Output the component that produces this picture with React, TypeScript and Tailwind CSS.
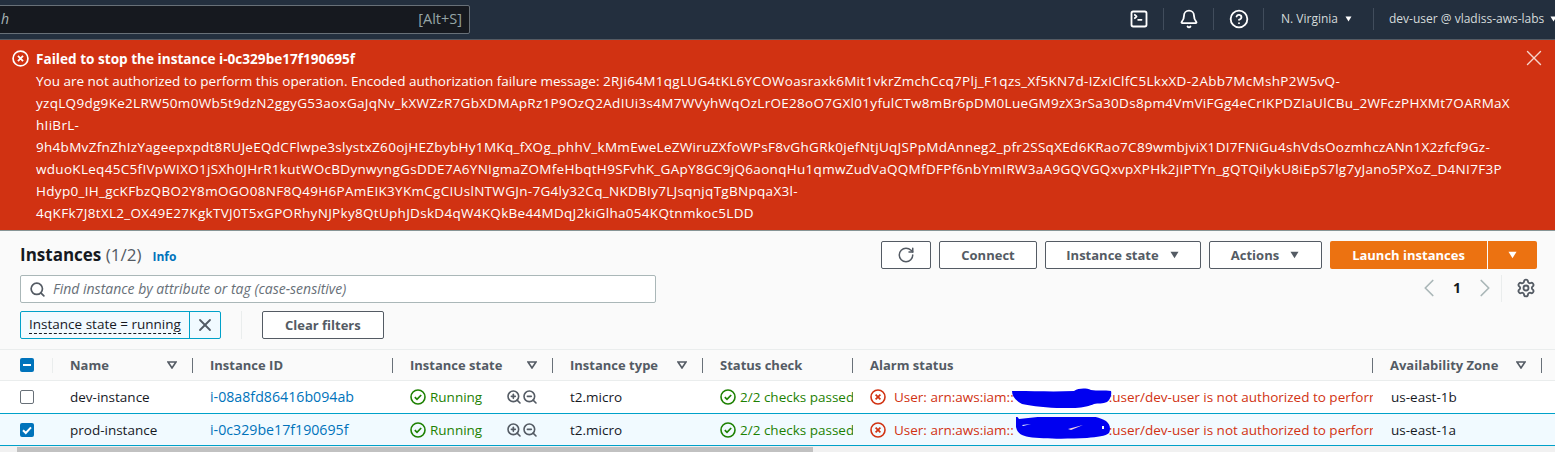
import { Bell, ChevronLeft, ChevronRight, CircleHelp, RotateCw, Search, Settings, SquareTerminal, X, ZoomIn, ZoomOut } from 'lucide-react'

const MESSAGE_INTRO = 'You are not authorized to perform this operation. Encoded authorization failure message: '

const MESSAGE_LINES = [
	'2RJi64M1qgLUG4tKL6YCOWoasraxk6Mit1vkrZmchCcq7Plj_F1qzs_Xf5KN7d-IZxIClfC5LkxXD-2Abb7McMshP2W5vQ-',
	'yzqLQ9dg9Ke2LRW50m0Wb5t9dzN2ggyG53aoxGaJqNv_kXWZzR7GbXDMApRz1P9OzQ2AdIUi3s4M7WVyhWqOzLrOE28oO7GXl01yfulCTw8mBr6pDM0LueGM9zX3rSa30Ds8pm4VmViFGg4eCrIKPDZIaUlCBu_2WFczPHXMt7OARMaX',
	'hIiBrL-',
	'9h4bMvZfnZhIzYageepxpdt8RUJeEQdCFlwpe3slystxZ60ojHEZbybHy1MKq_fXOg_phhV_kMmEweLeZWiruZXfoWPsF8vGhGRk0jefNtjUqJSPpMdAnneg2_pfr2SSqXEd6KRao7C89wmbjviX1DI7FNiGu4shVdsOozmhczANn1X2zfcf9Gz-',
	'wduoKLeq45C5fIVpWIXO1jSXh0JHrR1kutWOcBDynwyngGsDDE7A6YNIgmaZOMfeHbqtH9SFvhK_GApY8GC9jQ6aonqHu1qmwZudVaQQMfDFPf6nbYmIRW3aA9GQVGQxvpXPHk2jIPTYn_gQTQilykU8iEpS7lg7yJano5PXoZ_D4NI7F3P',
	'Hdyp0_IH_gcKFbzQBO2Y8mOGO08NF8Q49H6PAmEIK3YKmCgCIUslNTWGJn-7G4ly32Cq_NKDBIy7LJsqnjqTgBNpqaX3l-',
	'4qKFk7J8tXL2_OX49E27KgkTVJ0T5xGPORhyNJPky8QtUphJDskD4qW4KQkBe44MDqJ2kiGlha054KQtnmkoc5LDD'
]

const COLUMNS = 'grid grid-cols-[53px_140px_200px_160px_150px_150px_520px_169px_1fr]'

const Caret = ({ className }: { className: string }) => (
	<svg viewBox="0 0 12 10" className={className}>
		<path d="M1 1h10L6 9z" fill="currentColor" />
	</svg>
)

const SortCaret = () => (
	<svg viewBox="0 0 10 8" className="h-[8px] w-[10px] text-[#545b64]">
		<path d="M1 1h8L5 7z" fill="none" stroke="currentColor" strokeWidth="1.6" />
	</svg>
)

const CheckCircle = () => (
	<svg viewBox="0 0 16 16" className="h-[16px] w-[16px] shrink-0 text-[#1d8102]">
		<circle cx="8" cy="8" r="7" fill="none" stroke="currentColor" strokeWidth="1.6" />
		<path d="M4.8 8.2l2.2 2.2 4.2-4.4" fill="none" stroke="currentColor" strokeWidth="1.7" />
	</svg>
)

const ErrorCircle = ({ className }: { className: string }) => (
	<svg viewBox="0 0 16 16" className={className}>
		<circle cx="8" cy="8" r="7" fill="none" stroke="currentColor" strokeWidth="1.6" />
		<path d="M5.6 5.6l4.8 4.8M10.4 5.6l-4.8 4.8" fill="none" stroke="currentColor" strokeWidth="1.7" />
	</svg>
)

// hand-drawn redaction over the account id
const Scribble = ({ alt }: { alt?: boolean }) =>
	alt ? (
		<svg viewBox="0 0 98 25" className="-mr-[3px] h-[25px] w-[98px] shrink-0 -translate-y-[3px]">
			<path d="M2 1l3 4c20-2 40-5 60-4 10 0 20 2 27 6 4 3 5 8 3 12-3 3-12 4-22 5-20 1-44 1-58-1C8 22 3 19 2 13z" fill="#0000f0" />
			<path d="M54 15l15-4-12 5z" fill="#f6d5e0" />
			<path d="M8 11l9-1-8 2zM88 12h2v3h-2z" fill="#f1faff" />
		</svg>
	) : (
		<svg viewBox="0 0 100 21" className="-ml-[2px] -mr-[3px] h-[21px] w-[100px] shrink-0 translate-y-[1px]">
			<path d="M0 3c20 0 42 1 62 0 5-3 12-3 17-1 6 1 14 0 20 1 1 4-1 9-4 11-4 2-9 1-13 2-6 3-20 5-32 4-14 0-30-2-40-4C3 12 0 8 0 3z" fill="#0000f0" />
		</svg>
	)

const HeaderCell = ({ label, sort, divider = true }: { label: string; sort?: boolean; divider?: boolean }) => (
	<div className="flex h-[30px] items-center justify-between pl-[17px]">
		<span className="font-bold text-[#545b64]">{label}</span>
		<span className="flex items-center gap-[15px]">
			{sort && <SortCaret />}
			{divider && <span className="h-[15px] w-px bg-[#687078]" />}
		</span>
	</div>
)

const Row = ({
	name,
	id,
	zone,
	selected
}: {
	name: string
	id: string
	zone: string
	selected?: boolean
}) => (
	<div
		className={`${COLUMNS} items-center overflow-hidden whitespace-nowrap text-[13.5px] text-[#16191f] ${
			selected ? 'h-[33px] border-y border-[#00a1c9] bg-[#f1faff]' : 'h-[32px] bg-white'
		}`}
	>
		<div className="pl-[20px]">
			{selected ? (
				<span className="flex h-[14px] w-[14px] items-center justify-center rounded-[2px] bg-[#0073bb]">
					<svg viewBox="0 0 14 14" className="h-[14px] w-[14px]">
						<path d="M3 7.2l2.8 2.8L11 4.4" fill="none" stroke="#fff" strokeWidth="2" />
					</svg>
				</span>
			) : (
				<span className="block h-[14px] w-[14px] rounded-[2px] border border-[#687078] bg-white" />
			)}
		</div>
		<div className="pl-[17px]">{name}</div>
		<div className="pl-[17px] text-[14.2px] text-[#0073bb]">{id}</div>
		<div className="flex items-center pl-[17px] text-[#1d8102]">
			<CheckCircle />
			<span className="ml-[4px] w-[76px]">Running</span>
			<ZoomIn size={16} strokeWidth={2.4} className="text-[#545b64]" />
			<ZoomOut size={16} strokeWidth={2.4} className="text-[#545b64]" />
		</div>
		<div className="pl-[17px]">t2.micro</div>
		<div className="flex items-center overflow-hidden pl-[17px] text-[#1d8102]">
			<CheckCircle />
			<span className="ml-[4px]">2/2 checks passed</span>
		</div>
		<div className="flex items-center overflow-hidden pl-[17px] text-[#d13212]">
			<ErrorCircle className="h-[16px] w-[16px] shrink-0" />
			<span className="ml-[8px] shrink-0">User: arn:aws:iam::</span>
			<Scribble alt={selected} />
			<span className="shrink-0">:user/dev-user is not authorized to perform</span>
		</div>
		<div className="pl-[18px]">{zone}</div>
		<div />
	</div>
)

const OutlineButton = ({ children, className }: { children: React.ReactNode; className: string }) => (
	<div
		className={`flex h-[28px] items-center justify-center rounded-[2px] border border-[#545b64] bg-white font-bold text-[#545b64] ${className}`}
	>
		{children}
	</div>
)

export default function App() {
	return (
		<div className="h-[452px] w-[1555px] overflow-hidden bg-[#fafafa] font-['Open_Sans',sans-serif] text-[13px] leading-[20px]">
			{/* Top nav */}
			<div className="flex h-[40px] items-center border-b border-[#545b64] bg-[#232f3e] pb-[1px] text-[12px] text-[#d5dbdb]">
				<div className="-ml-[10px] flex h-[29px] w-[480px] items-center justify-between rounded-[2px] border border-[#687078] bg-[#16191f] pl-[10px] pr-[7px]">
					<span className="text-[14px] italic text-[#aab7b8]">h</span>
					<span className="text-[14.5px] text-[#95a5a6]">[Alt+S]</span>
				</div>
				<div className="ml-auto flex items-center">
					<SquareTerminal size={20} strokeWidth={2.2} className="mr-[14px] text-white" />
					<span className="h-[22px] w-px bg-[#414d5c]" />
					<Bell size={20} strokeWidth={2.2} className="ml-[15px] mr-[14px] text-white" />
					<span className="h-[22px] w-px bg-[#414d5c]" />
					<CircleHelp size={20} strokeWidth={2.2} className="ml-[15px] mr-[14px] text-white" />
					<span className="h-[22px] w-px bg-[#414d5c]" />
					<span className="ml-[17px] w-[60px] whitespace-nowrap">N. Virginia</span>
					<Caret className="ml-[3px] h-[6px] w-[9px] text-white" />
					<span className="ml-[20px] h-[22px] w-px bg-[#414d5c]" />
					<span className="ml-[15px] w-[158px] whitespace-nowrap">dev-user @ vladiss-aws-labs</span>
					<Caret className="-mr-[3px] ml-[2px] h-[6px] w-[9px] text-white" />
				</div>
			</div>

			{/* Error flash */}
			<div className="relative flex h-[190px] bg-[#d13212] pl-[12px] pt-[8px] text-white">
				<ErrorCircle className="mt-[2px] h-[17px] w-[17px] shrink-0" />
				<div className="ml-[7px] whitespace-nowrap text-[13.5px] leading-[22px]">
					<div className="text-[13.6px] font-bold">Failed to stop the instance i-0c329be17f190695f</div>
					{MESSAGE_LINES.map((line, i) => (
						<div key={line}>
							{i === 0 && MESSAGE_INTRO}
							<span className="tracking-[0.3px]">{line}</span>
						</div>
					))}
				</div>
				<X size={26} strokeWidth={1.3} className="absolute right-[8px] top-[5px] text-[#f6d5cc]" />
			</div>

			{/* Instances panel */}
			<div className="border-t border-[#879596]">
				<div className="flex items-start justify-between pl-[20px] pr-[18px] pt-[10px]">
					<div className="flex h-[28px] items-baseline gap-[11px]">
						<span className="text-[17px] font-bold leading-[27px] text-[#16191f]">
							Instances <span className="font-normal text-[#545b64]">(1/2)</span>
						</span>
						<span className="text-[12px] font-bold text-[#0073bb]">Info</span>
					</div>
					<div className="flex items-center">
						<OutlineButton className="mr-[8px] w-[50px]">
							<RotateCw size={18} />
						</OutlineButton>
						<OutlineButton className="mr-[8px] w-[98px]">Connect</OutlineButton>
						<OutlineButton className="mr-[8px] w-[156px] gap-[10px]">
							Instance state
							<Caret className="h-[8px] w-[11px]" />
						</OutlineButton>
						<OutlineButton className="mr-[8px] w-[113px] gap-[10px]">
							Actions
							<Caret className="h-[8px] w-[11px]" />
						</OutlineButton>
						<div className="flex h-[28px] items-center overflow-hidden rounded-[2px] font-bold text-white">
							<span className="flex h-full w-[157px] items-center justify-center bg-[#ec7211]">Launch instances</span>
							<span className="ml-px flex h-full w-[49px] items-center justify-center bg-[#ec7211]">
								<Caret className="h-[8px] w-[11px]" />
							</span>
						</div>
					</div>
				</div>

				<div className="flex h-[34px] items-end pl-[20px] pr-[19px]">
					<div className="flex h-[28px] w-[636px] items-center rounded-[2px] border border-[#aab7b8] bg-white pl-[8px] text-[14px] text-[#687078]">
						<Search size={17} strokeWidth={2.4} className="text-[#545b64]" />
						<span className="ml-[7px] italic">Find instance by attribute or tag (case-sensitive)</span>
					</div>
					<div className="ml-auto flex items-center text-[#aab7b8]">
						<ChevronLeft size={30} strokeWidth={1.4} />
						<span className="mx-[9px] w-[8px] text-[14px] font-bold text-[#16191f]">1</span>
						<ChevronRight size={30} strokeWidth={1.4} />
						<span className="ml-px mr-[14px] h-[27px] w-px bg-[#eaeded]" />
						<Settings size={20} strokeWidth={2.2} className="text-[#545b64]" />
					</div>
				</div>

				<div className="flex items-center pl-[20px] pt-[8px]">
					<div className="flex h-[28px] items-center rounded-[2px] border border-[#00a1c9] bg-[#f1faff] text-[13.5px] text-[#16191f]">
						<span className="mx-[8px] border-b border-dashed border-[#16191f] leading-[17px]">Instance state = running</span>
						<span className="flex h-full w-[31px] items-center justify-center border-l border-[#00a1c9]">
							<X size={20} strokeWidth={2.2} className="text-[#545b64]" />
						</span>
					</div>
					<span className="ml-[20px] h-[28px] w-px bg-[#eaeded]" />
					<OutlineButton className="ml-[20px] w-[122px]">Clear filters</OutlineButton>
				</div>

				{/* Table */}
				<div className="mt-[10px] border-t border-[#eaeded]">
					<div className={`${COLUMNS} h-[31px] items-center border-b border-[#eaeded] bg-[#fafafa]`}>
						<div className="flex items-center justify-between pl-[20px]">
							<span className="flex h-[14px] w-[14px] items-center justify-center rounded-[2px] bg-[#0073bb]">
								<span className="h-[2px] w-[8px] bg-white" />
							</span>
							<span className="h-[15px] w-px bg-[#eaeded]" />
						</div>
						<HeaderCell label="Name" sort />
						<HeaderCell label="Instance ID" />
						<HeaderCell label="Instance state" sort />
						<HeaderCell label="Instance type" sort />
						<HeaderCell label="Status check" />
						<HeaderCell label="Alarm status" />
						<HeaderCell label="Availability Zone" sort />
					</div>
					<Row name="dev-instance" id="i-08a8fd86416b094ab" zone="us-east-1b" />
					<Row name="prod-instance" id="i-0c329be17f190695f" zone="us-east-1a" selected />
				</div>

				{/* Horizontal scrollbar */}
				<div className="flex h-[8px] bg-[#f1f1f1] pl-[17px] pt-[1px]">
					<div className="h-[6px] w-[796px] bg-[#c1c1c1]" />
				</div>
			</div>
		</div>
	)
}
